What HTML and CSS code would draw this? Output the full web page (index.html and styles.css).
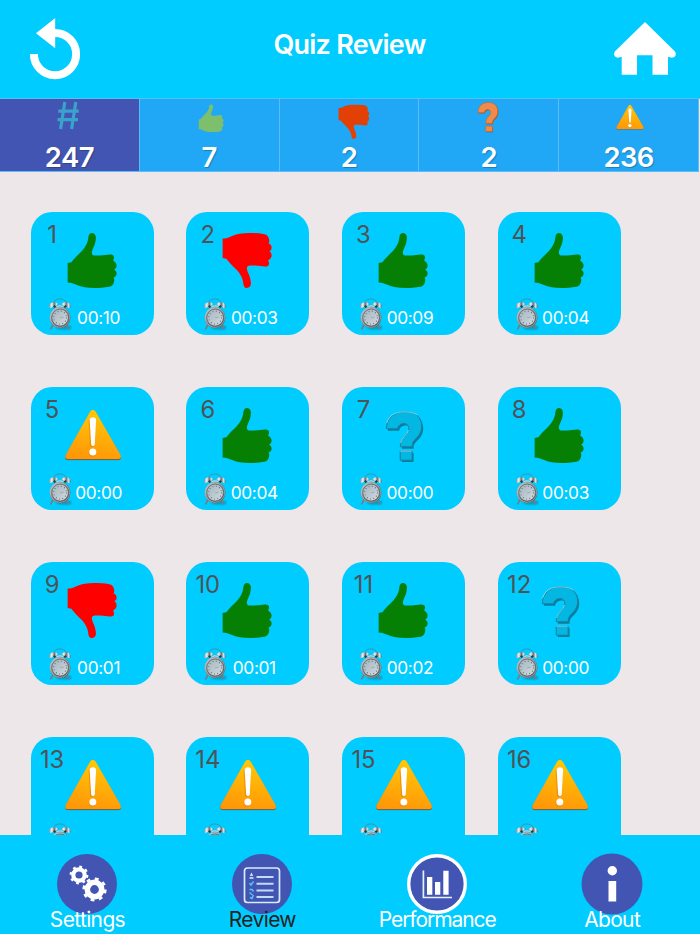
FILE: index.html
```html
<!DOCTYPE html>
<html lang="en">
<head>
<meta charset="utf-8">
<title>Quiz Review</title>
<link rel="stylesheet" href="styles.css">
</head>
<body>
<svg class="defs" aria-hidden="true">
  <defs>
    <linearGradient id="amber" x1="0.6" y1="0" x2="0.4" y2="1">
      <stop offset="0" stop-color="#ffc907"/><stop offset="1" stop-color="#ff9708"/>
    </linearGradient>
    <linearGradient id="metal" x1="0" y1="0" x2="1" y2="1">
      <stop offset="0" stop-color="#c4c6c7"/><stop offset="0.5" stop-color="#73787b"/><stop offset="1" stop-color="#45494c"/>
    </linearGradient>
    <linearGradient id="face" x1="0" y1="0" x2="1" y2="1">
      <stop offset="0" stop-color="#a3b3bd"/><stop offset="1" stop-color="#d3dce2"/>
    </linearGradient>
    <linearGradient id="bell" x1="0" y1="0" x2="1" y2="0">
      <stop offset="0" stop-color="#8a8e91"/><stop offset="0.3" stop-color="#f6f6f6"/><stop offset="0.55" stop-color="#6d7276"/><stop offset="0.8" stop-color="#e2e4e5"/><stop offset="1" stop-color="#6a6e70"/>
    </linearGradient>
    <filter id="soft" x="-30%" y="-50%" width="160%" height="200%"><feGaussianBlur stdDeviation="1"/></filter>
  </defs>
  <symbol id="thumb" viewBox="0 0 50 55">
    <path d="M0 30 L4 29.3 C7 25 11 21.5 14.5 18 C18 14 20.2 10 20.7 6 C21 2 22 0 24.3 0 C27 0 28.8 2.2 28.5 5 C28.3 9 27.3 12 25.8 15 C24.3 18.5 24 20.5 25.2 21.8 C26.2 22.9 29 22.6 33 22.5 L42.5 21.4 C45.5 21.2 47 22.6 46.6 25 L45.8 27.7 C48.5 29 49.4 31 49.2 33 C49 35 48 36 46.8 36.7 C48.5 37.6 49.4 39 49.2 40.8 C49 43 47.8 44 46.2 44.5 C47 45.8 47.1 47.5 46.5 49.3 C45.8 51.8 44.5 53.2 42 53.8 C37 54.8 32 55 27 55 C20 55 14 54 9 51.8 C6 50.3 4 49.4 0 49.4 Z"/>
  </symbol>
  <symbol id="warn" viewBox="0 0 57 51">
    <path d="M28.3 .8 Q30 .8 31.2 3 L56 46 Q57.5 50.7 53.5 50.7 L3.5 50.7 Q-.7 50.7 1 46 L25.4 3 Q26.6 .8 28.3 .8Z" fill="#75643d"/>
    <path d="M28.3 .2 Q30 .2 31.2 2.2 L56 45.5 Q57.3 49.6 53.5 49.6 L3.5 49.6 Q-.4 49.6 1 45.5 L25.4 2.2 Q26.6 .2 28.3 .2Z" fill="url(#amber)"/>
    <path d="M25 11 Q25.3 8.2 28.3 8.2 Q31.4 8.2 31.5 11 L30.3 35.2 Q28.2 39 26.4 35.2Z" fill="#e57d09" opacity=".6" transform="translate(-1 .7)"/>
    <circle cx="27.7" cy="43.4" r="3.6" fill="#e57d09" opacity=".6"/>
    <path d="M25 10.6 Q25.3 7.8 28.3 7.8 Q31.4 7.8 31.5 10.6 L30.1 35.3 Q28.2 38 26.6 35.3Z" fill="#fff"/>
    <circle cx="28.2" cy="42.6" r="3.5" fill="#fff"/>
  </symbol>
  <symbol id="question" viewBox="0 0 38 52">
    <path id="qshape" d="M.7 17.8 C.8 7.5 8 .8 19 .8 C29.5 .8 36 6 36 15.3 C36 26.5 26.7 27.5 26.5 34.4 L26.5 35.8 L14.7 35.8 L14.7 33.5 C14.5 26 23.2 23.5 23.2 17.8 C23.2 14.5 21 12.5 18 12.5 C14.8 12.5 12.6 14.6 11.8 17.8 Z M14.5 40.2 H26.4 V49.2 H14.5Z"/>
  </symbol>
  <symbol id="clock" viewBox="0 0 24 33">
    <ellipse cx="16" cy="29.5" rx="8" ry="2" fill="#087b9b" opacity=".65" filter="url(#soft)"/>
    <path d="M5.2 5.6 C6.5 -.6 16.5 -.6 18.5 5.2" fill="none" stroke="#577a86" stroke-width=".8" stroke-dasharray="2 .5"/>
    <path d="M4.6 27.5 L2.8 30.8 M19 27.5 L20.8 30.8" stroke="#777d80" stroke-width="1.7" stroke-linecap="round"/>
    <path d="M1 8.5 C1 4 8.5 2.7 10.6 6.6 L2 10.3 Q1 10 1 8.5Z" fill="url(#bell)"/>
    <path d="M22.6 8.4 C22.6 4 15.4 2.7 13 6.6 L21.6 10.3 Q22.6 10 22.6 8.4Z" fill="url(#bell)"/>
    <path d="M5.8 7.8 L7.4 9.4 M18 7.8 L16.4 9.4" stroke="#303538" stroke-width="2"/>
    <path d="M8.4 9 Q12 6.8 15.4 9" fill="none" stroke="#caced0" stroke-width="1.2"/>
    <ellipse cx="12" cy="19.6" rx="10.5" ry="10.6" fill="url(#metal)"/>
    <ellipse cx="12" cy="19.6" rx="9.6" ry="9.7" fill="none" stroke="#d6d8d9" stroke-width=".5"/>
    <ellipse cx="12.1" cy="19.6" rx="8.3" ry="8.5" fill="url(#face)" stroke="#565d61" stroke-width=".7"/>
    <circle cx="12.1" cy="19.6" r="6.4" fill="none" stroke="#56636c" stroke-width="1.1" stroke-dasharray=".8 2.551"/>
    <path d="M12.1 19.9 L15.7 19.1" stroke="#8797a0" stroke-width=".6"/>
  </symbol>
</svg>

<header class="header">
  <svg class="header-icon" viewBox="0 0 64 64"><path d="M4.9 36 A21.1 21.1 0 1 0 26 15" fill="none" stroke="#fff" stroke-width="8"/><path d="M7 15.2 L26.2 0 V30.2Z" fill="#fff"/></svg>
  <h1 class="title">Quiz Review</h1>
  <svg class="header-icon" viewBox="0 0 64 64"><path d="M31.5 4 L61.5 33.5 Q64 38.5 58.5 39.8 L54.5 38.7 V56.8 H39 V37.3 H23.5 V56.8 H8.2 V38.7 L4.5 39.8 Q-1 38.5 1.3 33.5Z" transform="translate(.5 0)" fill="#fff"/></svg>
</header>

<nav class="stats">
  <div class="stat stat-on">
    <svg class="stat-icon" viewBox="0 0 60 40"><path d="M25.8 3 L21.6 30 M36.8 3 L32.6 30 M19.3 12.2 H39.7 M18.5 20.7 H39" fill="none" stroke="#39a3cc" stroke-width="3.2"/></svg>
    <span class="stat-num">247</span>
  </div>
  <div class="stat">
    <svg class="stat-icon" viewBox="0 0 60 40"><use href="#thumb" x="19.5" y="5.2" width="25.5" height="28" fill="#7dbf6c"/></svg>
    <span class="stat-num">7</span>
  </div>
  <div class="stat">
    <svg class="stat-icon" viewBox="0 0 60 40"><g transform="translate(0 40) scale(1 -1)"><use href="#thumb" x="19.3" y="0" width="31.5" height="34.6" fill="#e34005"/></g></svg>
    <span class="stat-num">2</span>
  </div>
  <div class="stat">
    <svg class="stat-icon" viewBox="0 0 60 40"><g transform="translate(18.6 3) scale(.56 .6)"><use href="#qshape" x="1.2" y="1.2" fill="#9a552d"/><use href="#qshape" fill="#f08b4b" stroke="#bd662f" stroke-width="1"/></g></svg>
    <span class="stat-num">2</span>
  </div>
  <div class="stat">
    <svg class="stat-icon" viewBox="0 0 60 40"><use href="#warn" x="17" y="5.2" width="28" height="26"/></svg>
    <span class="stat-num">236</span>
  </div>
</nav>

<main class="cards" id="cards"></main>

<nav class="tabs">
  <a class="tab">
    <svg class="tab-icon" viewBox="0 0 60 60"><circle cx="30" cy="30" r="30" fill="#4355b2"/><g fill="none" stroke="#fff"><circle cx="22" cy="21" r="5.7" stroke-width="4.2"/><circle cx="22" cy="21" r="8.3" stroke-width="2.2" stroke-dasharray="2.8 3.719"/><circle cx="37.5" cy="35.5" r="7.2" stroke-width="5.6"/><circle cx="37.5" cy="35.5" r="10.8" stroke-width="2.6" stroke-dasharray="3.8 4.682"/></g></svg>
    <span class="tab-label">Settings</span>
  </a>
  <a class="tab tab-on">
    <svg class="tab-icon" viewBox="0 0 60 60"><circle cx="30" cy="30" r="30" fill="#4355b2"/><rect x="12.5" y="14" width="35" height="34.5" rx="3" fill="none" stroke="#d5edfa" stroke-width="1.7"/><path d="M24.5 23 H41.5 M24.5 29.7 H41.5 M24.5 36.4 H41.5 M24.5 43 H41.5" stroke="#c0dcf2" stroke-width="2"/><path d="M17.5 24 H21.5 M18.5 22 L19.5 20 L20.5 22" stroke="#d5edfa" stroke-width="1.3" fill="none"/><path d="M17.5 29 L19 31 L21.5 27.5 M17.5 35.5 H20 L21.5 37.5 M17.5 38.5 L20.5 41 M18 43.5 L20 44.5 L21.5 41" stroke="#55c8ef" stroke-width="1.4" fill="none"/></svg>
    <span class="tab-label">Review</span>
  </a>
  <a class="tab">
    <svg class="tab-icon" viewBox="0 0 60 60"><circle cx="30" cy="30" r="28.3" fill="#4355b2" stroke="#fff" stroke-width="3.4"/><path d="M16.4 16.5 V43.5 H45" fill="none" stroke="#e4f1fb" stroke-width="1.7"/><path d="M20 23 H25.3 V40.8 H20Z M28 28 H33.3 V40.8 H28Z M36.3 16.7 H41.6 V40.8 H36.3Z" fill="#fff"/></svg>
    <span class="tab-label tab-label-long">Performance</span>
  </a>
  <a class="tab">
    <svg class="tab-icon" viewBox="0 0 60 60"><circle cx="30" cy="30" r="30.5" fill="#4355b2"/><circle cx="30.3" cy="16.8" r="4.7" fill="#fff"/><path d="M26.5 27 H34.2 V47.5 H26.5Z" fill="#fff"/></svg>
    <span class="tab-label">About</span>
  </a>
</nav>
<script src="cards.js"></script>
</body>
</html>
```
FILE: styles.css
```css
* { box-sizing: border-box; }
body {
  margin: 0;
  width: 700px;
  height: 934px;
  overflow: hidden;
  display: flex;
  flex-direction: column;
  background: #ede7ea;
  font-family: Inter, "Liberation Sans", sans-serif;
}
.defs { position: absolute; width: 0; height: 0; }

.header {
  flex: none;
  height: 98px;
  padding: 18px 23px 0 29px;
  display: flex;
  justify-content: space-between;
  align-items: flex-start;
  background: #00ccff;
}
.header-icon { width: 64px; height: 64px; display: block; }
.title {
  margin: 9px 7px 0 0;
  font-size: 27px;
  line-height: 36px;
  font-weight: 600;
  letter-spacing: -0.75px;
  color: #fff;
}

.stats {
  flex: none;
  height: 74px;
  display: grid;
  grid-template-columns: repeat(5, 1fr);
  grid-template-rows: 73px;
  padding-right: 1px;
  border-top: 1px solid #54c1f2;
}
.stat {
  display: flex;
  flex-direction: column;
  align-items: center;
  background: #20a8f7;
  border-right: 1px solid #5cbdf4;
  border-bottom: 1px solid #5cbdf4;
}
.stat-on { background: #4355b2; }
.stat-icon { width: 60px; height: 40px; display: block; flex: none; }
.stat-num {
  font-size: 27.5px;
  line-height: 37px;
  font-weight: 600;
  letter-spacing: -0.6px;
  color: #fff;
  text-shadow: 1px 1px 1px rgba(0, 0, 0, .25);
}

.cards {
  flex: 1;
  min-height: 0;
  overflow: hidden;
  display: grid;
  grid-template-columns: repeat(4, 123px);
  grid-auto-rows: 123px;
  gap: 52px 32.7px;
  padding: 40px 0 0 30.6px;
}
.card {
  border-radius: 21px;
  background: #00ccff;
  display: grid;
  grid-template-rows: 86px 1fr;
}
.number {
  grid-area: 1 / 1;
  width: 43px;
  padding-top: 8px;
  text-align: center;
  font-size: 23.8px;
  line-height: 29px;
  color: #4f5357;
}
.mark { grid-area: 1 / 1; display: block; width: 123px; height: 86px; }
.time {
  grid-area: 2 / 1;
  display: flex;
  align-items: flex-start;
  padding-left: 17px;
  font-size: 17.3px;
  color: #fff;
}
.time svg { width: 24px; height: 33px; display: block; }
.time span { width: 54px; text-align: center; line-height: 22px; margin-top: 8.6px; letter-spacing: -0.35px; }

.tabs {
  flex: none;
  height: 99px;
  padding-top: 19px;
  display: grid;
  grid-template-columns: repeat(4, 174.9px);
  background: #00ccff;
}
.tab { display: flex; flex-direction: column; align-items: center; color: #fff; }
.tab-on { color: #222; }
.tab-icon { width: 60px; height: 60px; display: block; overflow: visible; flex: none; }
.tab-label {
  margin-top: -8px;
  font-size: 21px;
  line-height: 28px;
  letter-spacing: -0.65px;
  position: relative;
}
.tab-label-long { letter-spacing: -1.05px; }
```
FILE: cards.js
```js
const answers = [
  ["up", "00:10"], ["down", "00:03"], ["up", "00:09"], ["up", "00:04"],
  ["warn", "00:00"], ["up", "00:04"], ["question", "00:00"], ["up", "00:03"],
  ["down", "00:01"], ["up", "00:01"], ["up", "00:02"], ["question", "00:00"],
  ["warn", ""], ["warn", ""], ["warn", ""], ["warn", ""]
];

const marks = {
  up: '<use href="#thumb" x="36.4" y="21" width="50" height="55" fill="#058005"/>',
  down: '<g transform="translate(0 97) scale(1 -1)"><use href="#thumb" x="36.4" y="21" width="50" height="55" fill="#ff0000"/></g>',
  warn: '<use href="#warn" x="33.6" y="22.5" width="57" height="51"/>',
  question: '<g transform="translate(43.7 24)"><use href="#qshape" x="1.5" y="1.9" fill="#087e9f"/>' +
    '<use href="#qshape" fill="#03b7e3" stroke="#1c7f9c" stroke-width="1"/>' +
    '<path d="M1 12 C3.5 4 9.5 1 19 .8 C24 .8 29 2 31.5 4 M14.7 32 C15.5 26 22 24 22.8 19 M14.5 40.2 H26" fill="none" stroke="#9bdcea" stroke-width=".8"/></g>'
};

document.getElementById("cards").innerHTML = answers.map(([mark, time], i) =>
  `<article class="card">
    <span class="number">${i + 1}</span>
    <svg class="mark" viewBox="0 0 123 86">${marks[mark]}</svg>
    <div class="time"><svg viewBox="0 0 24 33"><use href="#clock" width="24" height="33"/></svg><span>${time}</span></div>
  </article>`).join("");
```
